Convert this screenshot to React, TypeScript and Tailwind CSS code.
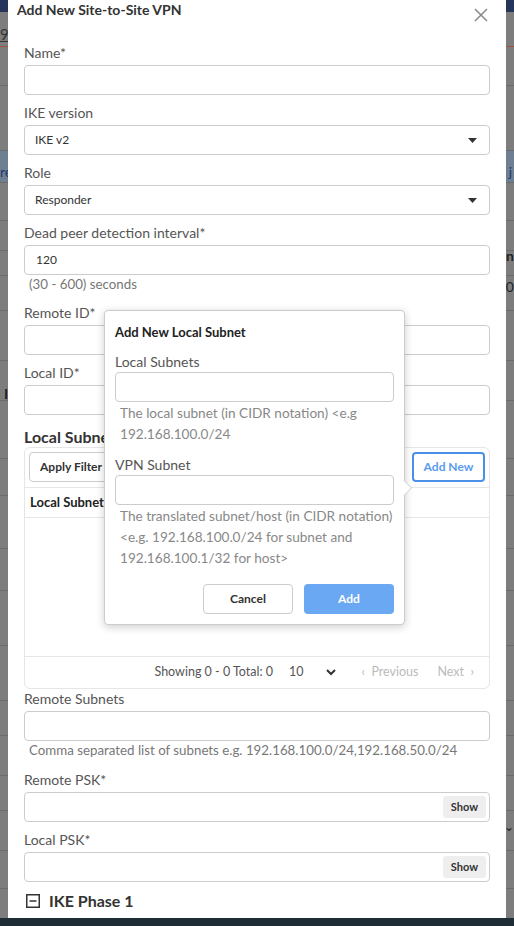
import React from "react";

const font = { fontFamily: "Lato, 'Open Sans', Arial, sans-serif" };

function Label({ children }: { children: React.ReactNode }) {
  return <div className="h-[20px] text-[14px] leading-[20px] text-[#555]">{children}</div>;
}

function TextInput({ value, show }: { value?: string; show?: boolean }) {
  return (
    <div className="mt-[2px] flex h-[30px] items-center rounded-[4px] border border-[#ccc] bg-white pl-[11px] pr-[3px] text-[12px] text-[#333]">
      <span className="flex-1">{value}</span>
      {show && (
        <span className="rounded-[3px] bg-[#eee] px-[8px] py-[3px] text-[11px] font-bold text-[#333]">Show</span>
      )}
    </div>
  );
}

function Select({ value }: { value: string }) {
  return (
    <div className="mt-[2px] flex h-[30px] items-center justify-between rounded-[4px] border border-[#ccc] bg-white pl-[10px] pr-[12px] text-[12px] text-[#333]">
      <span>{value}</span>
      <svg width="9" height="5" viewBox="0 0 9 5">
        <path d="M0 0h9L4.5 5z" fill="#333" />
      </svg>
    </div>
  );
}

function Field({
  label,
  children,
  helper,
  helperH = "h-[20px]",
}: {
  label: string;
  children: React.ReactNode;
  helper?: string;
  helperH?: string;
}) {
  return (
    <div className="mb-[8px]">
      <Label>{label}</Label>
      {children}
      {helper && (
        <div className={`${helperH} whitespace-nowrap pl-[5px] text-[13.3px] leading-[19px] text-[#777]`}>{helper}</div>
      )}
    </div>
  );
}

function Backdrop() {
  const rows = [46, 85, 150, 182, 220, 250, 275, 310, 360, 400, 458, 495, 548, 590, 645, 700, 735, 775, 810, 850, 888];
  return (
    <div className="absolute inset-0 bg-[#7d7d7d]">
      <div className="h-[12px] bg-[#26365a]" />
      <div className="absolute left-0 top-[23px] text-[15px] text-[#333] underline">9</div>
      <div className="absolute left-0 right-0 top-[150px] h-[32px] bg-[#6f7f92]" />
      {rows.map((y) => (
        <div key={y} className="absolute left-0 right-0 h-px bg-[#6c6c6c]" style={{ top: y }} />
      ))}
      <div className="absolute left-0 right-0 top-[46px] h-px bg-[#a0523a]" />
      <div className="absolute right-0 top-[245px] text-[14px] font-bold text-[#222]">en</div>
      <div className="absolute right-0 top-[276px] text-[14px] text-[#222]">10</div>
      <div className="absolute right-[2px] top-[161px] text-[14px] text-[#1e3a6a]">j</div>
      <div className="absolute left-0 top-[161px] text-[14px] text-[#1e3a6a]">re</div>
      <div className="absolute left-[4px] top-[383px] text-[14px] font-bold text-[#222]">I</div>
      <div className="absolute right-0 top-[818px] text-[12px] text-[#222]">⌄</div>
      <div className="absolute bottom-0 left-0 right-0 z-10 h-[8px] bg-[#1d2c35]" />
    </div>
  );
}

function Popover() {
  return (
    <div className="absolute left-[104px] top-[310px] w-[301px] rounded-[4px] border border-[#ccc] bg-white px-[10px] pb-[10px] pt-[13px] shadow-[0_2px_8px_rgba(0,0,0,0.2)]">
      <div className="h-[17px] text-[13px] font-bold leading-[17px] text-[#222]">Add New Local Subnet</div>
      <div className="mt-[11px]">
        <Label>Local Subnets</Label>
      </div>
      <div className="h-[30px] rounded-[4px] border border-[#ccc]" />
      <div className="mt-[1px] whitespace-nowrap pl-[5px] text-[13.6px] leading-[21px] text-[#888]">
        The local subnet (in CIDR notation) &lt;e.g
        <br />
        192.168.100.0/24
      </div>
      <div className="mt-[10px]">
        <Label>VPN Subnet</Label>
      </div>
      <div className="h-[30px] rounded-[4px] border border-[#ccc]" />
      <div className="mt-[1px] whitespace-nowrap pl-[5px] text-[13.6px] leading-[21px] text-[#888]">
        The translated subnet/host (in CIDR notation)
        <br />
        &lt;e.g. 192.168.100.0/24 for subnet and
        <br />
        192.168.100.1/32 for host&gt;
      </div>
      <div className="mt-[15px] flex justify-end gap-[11px]">
        <button className="h-[30px] w-[90px] rounded-[4px] border border-[#ccc] bg-white text-[12px] font-bold text-[#333]">
          Cancel
        </button>
        <button className="h-[30px] w-[90px] rounded-[4px] bg-[#6aa8f3] text-[12px] font-bold text-white">Add</button>
      </div>
      <div className="absolute -right-[8px] top-[169px] h-0 w-0 border-y-[8px] border-l-[8px] border-y-transparent border-l-[#ccc]" />
      <div className="absolute -right-[7px] top-[170px] h-0 w-0 border-y-[7px] border-l-[7px] border-y-transparent border-l-white" />
    </div>
  );
}

export default function App() {
  return (
    <div className="relative h-[926px] w-[514px] overflow-hidden" style={font}>
      <Backdrop />
      <div className="absolute left-[8px] top-0 h-[918px] w-[498px] bg-white">
        <div className="flex items-start justify-between pl-[9px] pr-[18px] pt-[2px]">
          <div className="text-[14px] font-bold leading-[16px] text-[#333]">Add New Site-to-Site VPN</div>
          <svg width="14" height="14" viewBox="0 0 14 14" className="mt-[6px]">
            <path d="M1 1l12 12M13 1L1 13" stroke="#888" strokeWidth="1.5" />
          </svg>
        </div>
        <div className="px-[16px] pt-[21px]">
          <Field label="Name*">
            <TextInput />
          </Field>
          <Field label="IKE version">
            <Select value="IKE v2" />
          </Field>
          <Field label="Role">
            <Select value="Responder" />
          </Field>
          <Field label="Dead peer detection interval*" helper="(30 - 600) seconds">
            <TextInput value="120" />
          </Field>
          <Field label="Remote ID*">
            <TextInput />
          </Field>
          <div>
            <Label>Local ID*</Label>
            <TextInput />
          </div>
          <div className="mt-[12px] h-[20px] text-[16px] font-bold leading-[20px] text-[#333]">Local Subnets</div>
          <div className="flex h-[242px] flex-col rounded-[6px] border border-[#e6e6e6]">
            <div className="flex items-center justify-between px-[4px] pt-[4px]">
              <button className="h-[30px] rounded-[4px] border border-[#ccc] px-[10px] text-[12px] font-bold text-[#333]">
                Apply Filter
              </button>
              <button className="h-[30px] w-[73px] rounded-[4px] border-2 border-[#4a90e8] text-[12px] font-bold text-[#5a9bee]">
                Add New
              </button>
            </div>
            <div className="mt-[5px] flex h-[31px] items-center border-y border-[#e6e6e6] px-[5px] text-[13px] font-bold text-[#222]">
              Local Subnet
            </div>
            <div className="flex-1" />
            <div className="flex h-[32px] items-center justify-end border-t border-[#e6e6e6] pr-[15px] text-[12.5px]">
              <span className="text-[#555]">Showing 0 - 0 Total: 0</span>
              <span className="ml-[16px] text-[#555]">10</span>
              <svg width="10" height="7" viewBox="0 0 10 7" className="ml-[22px]">
                <path d="M1 1l4 4 4-4" stroke="#333" strokeWidth="2" fill="none" />
              </svg>
              <span className="ml-[26px] text-[#bbb]">‹&nbsp;&nbsp;Previous</span>
              <span className="ml-[19px] text-[#bbb]">Next&nbsp;&nbsp;›</span>
            </div>
          </div>
          <Field
            label="Remote Subnets"
            helper="Comma separated list of subnets e.g. 192.168.100.0/24,192.168.50.0/24"
            helperH="h-[20px]"
          >
            <TextInput />
          </Field>
          <div className="h-[1px]" />
          <Field label="Remote PSK*">
            <TextInput show />
          </Field>
          <Field label="Local PSK*">
            <TextInput show />
          </Field>
          <div className="mt-[9px] flex items-center gap-[9px] pl-[2px]">
            <svg width="14" height="14" viewBox="0 0 14 14">
              <rect x="0.75" y="0.75" width="12.5" height="12.5" fill="none" stroke="#333" strokeWidth="1.5" />
              <path d="M3.5 7h7" stroke="#333" strokeWidth="1.5" />
            </svg>
            <span className="text-[16px] font-bold leading-[20px] text-[#333]">IKE Phase 1</span>
          </div>
        </div>
      </div>
      <Popover />
    </div>
  );
}
